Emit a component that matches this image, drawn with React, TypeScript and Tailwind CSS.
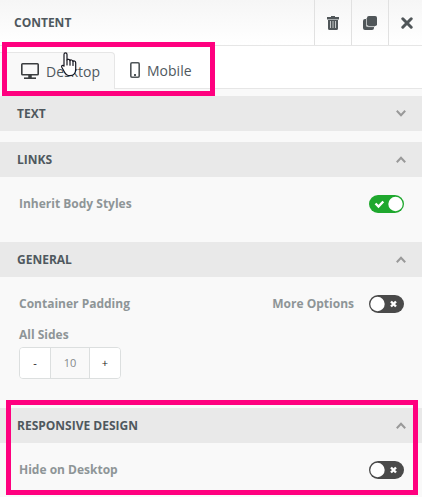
import { useState } from 'react';
import type { ReactNode } from 'react';

type Device = 'desktop' | 'mobile';

export default function App() {
    const [device, setDevice] = useState<Device>('desktop');
    const [inherit, setInherit] = useState(true);
    const [moreOptions, setMoreOptions] = useState(false);
    const [hidden, setHidden] = useState(false);
    const [padding, setPadding] = useState(10);

    return (
        <div className="min-h-screen overflow-hidden bg-[#f9f9f9] font-['Open_Sans',sans-serif] text-[#4f585e]">
            <header className="flex h-[46px] items-stretch border-b border-[#e6e6e6] bg-linear-to-b from-[#f6f6f6] to-white">
                <h1 className="flex flex-1 items-center pl-[14px] text-[12px] font-bold">CONTENT</h1>
                <HeaderButton label="Delete">
                    <TrashIcon />
                </HeaderButton>
                <HeaderButton label="Duplicate">
                    <CopyIcon />
                </HeaderButton>
                <HeaderButton label="Close">
                    <CloseIcon />
                </HeaderButton>
            </header>

            <div className="relative mb-[7px] flex h-[43px] items-stretch bg-white pt-[6px]">
                <Tab active={device === 'desktop'} onClick={() => setDevice('desktop')}>
                    <DesktopIcon />
                    Desktop
                </Tab>
                <Tab active={device === 'mobile'} onClick={() => setDevice('mobile')}>
                    <MobileIcon />
                    Mobile
                </Tab>
                <div className="flex-1 border-b border-[#e6e6e6]" />
                <div className="pointer-events-none absolute -top-1 left-[2px] h-[54px] w-[213px] border-5 border-[#ff007f]" />
                <PointerIcon />
            </div>

            <div className="flex flex-col gap-[11px]">
                <Section title="TEXT" defaultOpen={false} />

                <Section title="LINKS">
                    <div className="flex h-[18px] items-center justify-between">
                        <label htmlFor="inherit">Inherit Body Styles</label>
                        <Toggle id="inherit" checked={inherit} onChange={setInherit} />
                    </div>
                </Section>

                <Section title="GENERAL">
                    <div className="flex h-[18px] items-center">
                        <span className="flex-1">Container Padding</span>
                        <label htmlFor="more" className="mr-[15px]">More Options</label>
                        <Toggle id="more" checked={moreOptions} onChange={setMoreOptions} />
                    </div>
                    <label htmlFor="all-sides" className="mt-3 mb-[2px] block w-fit leading-5">All Sides</label>
                    <div className="flex h-8 w-[102px] overflow-hidden rounded border border-[#dcdfdf] text-[11px] font-normal">
                        <button type="button" aria-label="Decrease" onClick={() => setPadding(Math.max(0, padding - 1))} className="w-[30px] bg-white text-[#222]">-</button>
                        <input
                            id="all-sides"
                            inputMode="numeric"
                            value={padding}
                            onChange={(e) => setPadding(Number(e.target.value) || 0)}
                            className="min-w-0 flex-1 border-x border-[#dcdfdf] bg-[#f9f9f9] text-center text-[#85898b]"
                        />
                        <button type="button" aria-label="Increase" onClick={() => setPadding(padding + 1)} className="w-[30px] bg-white text-[#222]">+</button>
                    </div>
                </Section>

                <div className="relative">
                    <Section title="RESPONSIVE DESIGN">
                        <div className="flex h-[18px] items-center justify-between">
                            <label htmlFor="hide">Hide on Desktop</label>
                            <Toggle id="hide" checked={hidden} onChange={setHidden} />
                        </div>
                    </Section>
                    <div className="pointer-events-none absolute -top-2 right-1 bottom-[2px] left-[6px] border-5 border-[#ff007f]" />
                </div>
            </div>
        </div>
    );
}

function HeaderButton({ label, children }: { label: string; children: ReactNode }) {
    return (
        <button type="button" aria-label={label} className="flex w-[37px] items-center justify-center border-l border-[#e1e1e1] last:w-[34px] last:justify-start last:pl-3">
            {children}
        </button>
    );
}

function Tab({ active, onClick, children }: { active: boolean; onClick: () => void; children: ReactNode }) {
    return (
        <button
            type="button"
            aria-pressed={active}
            onClick={onClick}
            className={`flex items-center gap-[7px] text-[14px] ${active ? 'rounded-tr border-t border-r border-[#e6e6e6] bg-[#f9f9f9] pr-[14px] pl-5' : 'border-b border-[#e6e6e6] px-[15px]'}`}
        >
            {children}
        </button>
    );
}

function Section({ title, defaultOpen = true, children }: { title: string; defaultOpen?: boolean; children?: ReactNode }) {
    const [open, setOpen] = useState(defaultOpen);
    return (
        <section>
            <button
                type="button"
                aria-expanded={open}
                onClick={() => setOpen(!open)}
                className="flex h-[35px] w-full items-center justify-between bg-[#e9e9e9] pr-4 pl-[17px] text-[12px] font-bold"
            >
                {title}
                <svg viewBox="0 0 10 7" fill="none" stroke="#999999" strokeWidth="2" className={`h-[7px] w-[10px] ${open ? '' : 'rotate-180'}`}>
                    <path d="M.8 6.2 5 1.8l4.2 4.4" />
                </svg>
            </button>
            {open && children && <div className="py-[18px] pr-[18px] pl-[19px] text-[12px] font-bold text-[#8e9597]">{children}</div>}
        </section>
    );
}

function Toggle({ id, checked, onChange }: { id: string; checked: boolean; onChange: (value: boolean) => void }) {
    return (
        <span className="relative h-[18px] w-[35px]">
            <input
                id={id}
                type="checkbox"
                role="switch"
                checked={checked}
                onChange={(e) => onChange(e.target.checked)}
                className="block h-full w-full cursor-pointer appearance-none rounded-full bg-[#4a4a4a] checked:bg-[#1fa82e]"
            />
            <svg viewBox="0 0 35 18" fill="none" stroke="white" className="pointer-events-none absolute inset-0">
                <circle cx={checked ? 26.5 : 8.5} cy="9" r="7.2" fill="white" stroke="none" />
                {checked ? <path d="m6.500 8.500 3 3 4.800-5" strokeWidth="2.4" /> : <path d="m22 6.500 5 5m0-5-5 5" strokeWidth="2.4" />}
            </svg>
        </span>
    );
}

function TrashIcon() {
    return (
        <svg viewBox="0 0 12 14" className="h-[14px] w-3" fill="#505659">
            <path d="M4 0h4v1h4v2H0V1h4z" />
            <path d="M1 4h10v8.500a1.500 1.500 0 0 1-1.500 1.500h-7A1.500 1.500 0 0 1 1 12.500z" />
            <path d="M0 3h12v1H0z" fill="#a9adaf" />
            <path d="M3 5h1v7H3zM5.500 5h1v7h-1zM8 5h1v7H8z" fill="#c4c7c8" />
        </svg>
    );
}

function CopyIcon() {
    return (
        <svg viewBox="0 0 14 14" className="h-[14px] w-[14px]" fill="#505659">
            <path d="M2 3h1v6a2 2 0 0 0 2 2h6v1a2 2 0 0 1-2 2H2a2 2 0 0 1-2-2V5a2 2 0 0 1 2-2z" />
            <path d="M3.500 2v7.200A1.500 1.500 0 0 0 5 10.600h7" fill="none" stroke="#b9bcbd" />
            <rect x="4" width="10" height="10" rx="1.8" />
        </svg>
    );
}

function CloseIcon() {
    return (
        <svg viewBox="0 0 12 12" className="h-3 w-3" stroke="#505659" strokeWidth="3" strokeLinecap="round">
            <path d="m1.800 1.800 8.400 8.400m0-8.400-8.400 8.400" />
        </svg>
    );
}

function DesktopIcon() {
    return (
        <svg viewBox="0 0 19 16" className="h-4 w-[19px]" fill="none" stroke="#3a3d3f" strokeWidth="1.600">
            <rect x="1.800" y=".8" width="16.400" height="11" rx=".8" />
            <path d="M10 12v3" strokeWidth="3.500" />
            <path d="M4 15.200h12" />
        </svg>
    );
}

function MobileIcon() {
    return (
        <svg viewBox="0 0 10 16" className="h-4 w-[10px]" fill="none" stroke="#505659" strokeWidth="1.600">
            <rect x=".8" y=".8" width="8.400" height="14.400" rx="1.200" />
            <path d="M4 13h2" strokeWidth="1.800" />
        </svg>
    );
}

// hand cursor resting on the Desktop tab
function PointerIcon() {
    return (
        <svg viewBox="0 0 16 25" className="pointer-events-none absolute top-[6px] left-[61px] h-[25px] w-4" fill="white" stroke="#15151f" strokeWidth="1.200" strokeLinejoin="round" strokeLinecap="round">
            <path d="M3 14.200V2.400a1.500 1.500 0 0 1 3 0V8c.2-1 2.800-.9 3 .6.300-1 2.800-.8 3 .8.400-.9 2.600-.6 2.700 1.300V17c0 4.200-2.300 6.700-5.700 6.700-3 0-4.600-1.600-5.700-4L.8 15.200c-.6-1.600.9-2.500 2.200-1z" />
            <path d="M6 8v5M9 8.600v4.600M12 9.400v4" fill="none" />
        </svg>
    );
}
